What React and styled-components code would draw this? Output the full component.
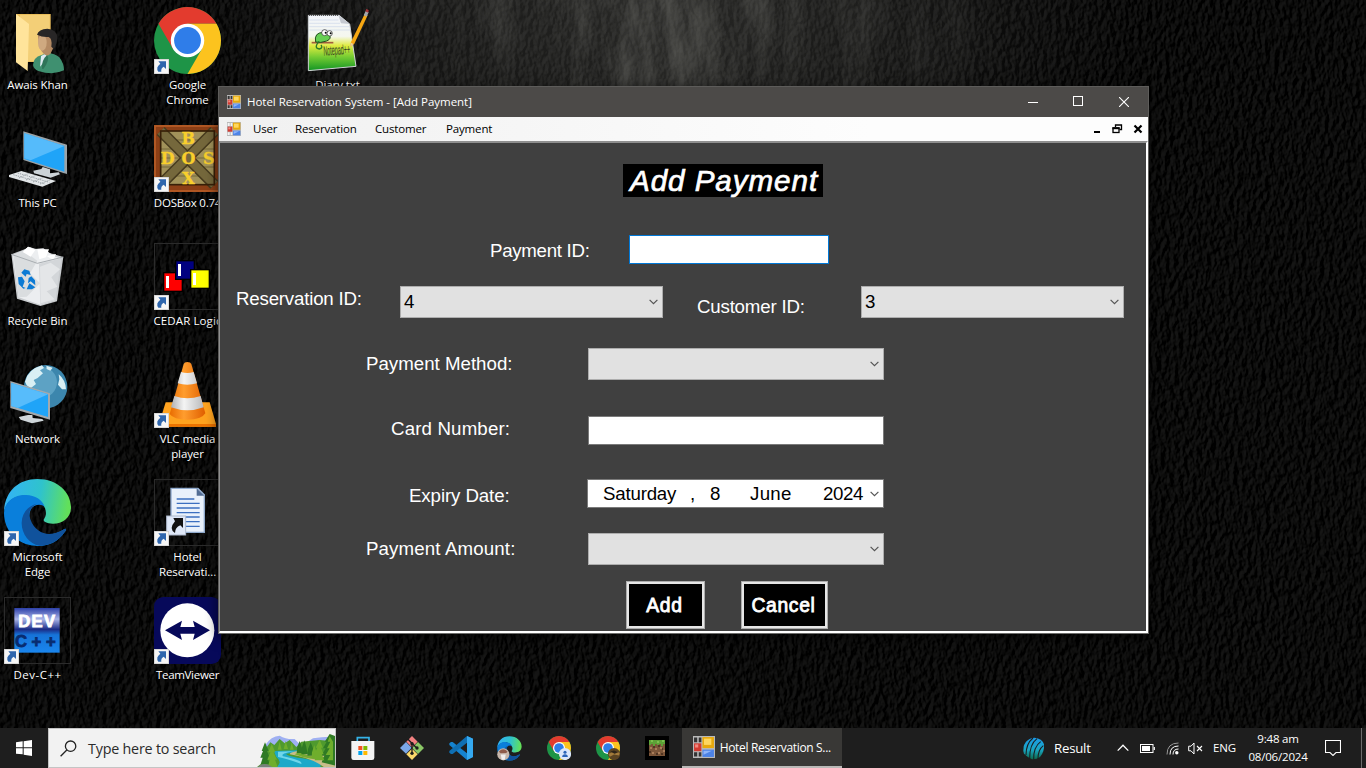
import React from "react";
import styled, { createGlobalStyle } from "styled-components";

const ui = `"Open Sans", "Noto Sans", sans-serif`;
const classic = `"Liberation Sans", Arial, sans-serif`;

const Global = createGlobalStyle`
  * { box-sizing: border-box; }
  body { margin: 0; background: #0a0a0a; overflow: hidden; }
  svg { display: block; flex: none; }
`;

const Screen = styled.div`
  display: grid;
  grid-template: 728px 40px / 1366px;
  width: 1366px;
  height: 768px;
  overflow: hidden;
  font-family: ${ui};
  font-size: 11.5px;
  letter-spacing: -0.2px;
`;

const WallpaperArt = styled.svg`
  grid-area: 1 / 1 / 3 / 2;
`;

const Desktop = styled.main`
  grid-area: 1 / 1;
  position: relative;
  display: flex;
  gap: 75px;
  padding-top: 7px;
`;

const IconColumn = styled.div`
  display: flex;
  flex-direction: column;
  width: 75px;
`;

const Shortcut = styled.div`
  display: flex;
  flex-direction: column;
  align-items: center;
  height: 118px;
`;

const IconFrame = styled.div`
  position: relative;
  width: 67px;
  height: 67px;
  outline: ${(p) => (p.$outlined ? "1px solid #2b2b2b" : "none")};
  outline-offset: -1px;
`;

const ArrowBadge = styled.svg`
  position: absolute;
  left: 0;
  bottom: 0;
`;

const ShortcutLabel = styled.div`
  margin-top: 3px;
  line-height: 15px;
  text-align: center;
  white-space: pre;
  letter-spacing: ${(p) => p.$track ?? -0.1}px;
  color: #fff;
  text-shadow: 1px 1px 2px #000;
`;

/* ---------- application window ---------- */

const AppWindow = styled.section`
  position: absolute;
  left: 218px;
  top: 86px;
  width: 931px;
  height: 548px;
  display: flex;
  flex-direction: column;
  border: 1px solid #5d5c5a;
  border-bottom-color: #6d6d6b;
  background: #4c4a48;
  box-shadow: 0 3px 12px rgba(0, 0, 0, 0.6);
`;

const TitleBar = styled.header`
  display: flex;
  align-items: center;
  height: 30px;
  padding: 0 1px 1px 8px;
  color: #fff;
  background: #4c4a48;
`;

const WindowTitle = styled.div`
  flex: 1;
  margin-left: 6px;
  line-height: 16px;
  letter-spacing: -0.02px;
`;

const CaptionButton = styled.div`
  display: flex;
  justify-content: center;
  align-items: center;
  width: 45.5px;
  height: 30px;
`;

const MenuBar = styled.nav`
  display: flex;
  align-items: center;
  height: 24px;
  padding: 0 5px 0 8px;
  background: linear-gradient(90deg, #f0f0f0, #fdfdfd 70%);
  color: #000;
`;

const MenuItem = styled.div`
  width: ${(p) => p.$width}px;
  line-height: 16px;
  letter-spacing: -0.15px;
`;

const MdiButtons = styled.div`
  display: flex;
  gap: 10px;
  margin-left: auto;
`;

const Client = styled.div`
  flex: 1;
  display: flex;
  flex-direction: column;
  border: solid;
  border-width: 2px 2px 2px 1px;
  border-color: #8f8f8f #fff #fff #8f8f8f;
  background: #404040;
  font-family: ${classic};
  font-size: 18.7px;
  letter-spacing: 0;
  color: #fff;
`;

const FormTitle = styled.h1`
  width: 200px;
  height: 33px;
  margin: 21px 0 0 403px;
  padding-left: 7px;
  background: #000;
  font-size: 29.6px;
  font-weight: 400;
  font-style: italic;
  line-height: 34px;
  letter-spacing: 0.95px;
  white-space: nowrap;
  -webkit-text-stroke: 0.7px #fff;
`;

const Row = styled.div`
  display: flex;
  align-items: flex-start;
  height: ${(p) => p.$height}px;
  margin-top: ${(p) => p.$gap}px;
  padding-left: ${(p) => p.$indent}px;
`;

const Label = styled.label`
  width: ${(p) => p.$width}px;
  margin-top: ${(p) => p.$drop}px;
  line-height: 22px;
  white-space: nowrap;
  letter-spacing: ${(p) => p.$track || 0}px;
`;

const TextBox = styled.div`
  width: ${(p) => p.$width}px;
  height: 29px;
  border: 1px solid ${(p) => (p.$focused ? "#0078d7" : "#7a7a7a")};
  background: #fff;
`;

const Combo = styled.div`
  display: flex;
  align-items: center;
  justify-content: space-between;
  width: ${(p) => p.$width}px;
  height: 32px;
  margin-right: ${(p) => p.$after || 0}px;
  padding: 0 4px 0 3px;
  border: 1px solid #adadad;
  background: #e1e1e1;
  color: #000;
`;

const DatePicker = styled.div`
  display: flex;
  align-items: center;
  width: 297px;
  height: 29px;
  padding: 0 4px 0 15px;
  border: 1px solid #7a7a7a;
  background: #fff;
  color: #000;
  svg { margin-left: auto; }
`;

const DatePart = styled.span`
  width: ${(p) => p.$width}px;
  letter-spacing: ${(p) => p.$track ?? -0.2}px;
`;

const PushButton = styled.div`
  display: flex;
  align-items: center;
  justify-content: center;
  width: ${(p) => p.$width}px;
  height: 48px;
  margin-right: 36px;
  padding: 1px 2px 0 0;
  border: 1px solid #adadad;
  box-shadow: inset 0 0 0 2px #e6e6e6;
  background: #000;
  font-size: 19.3px;
  letter-spacing: 0.65px;
  -webkit-text-stroke: 0.8px #fff;
`;

/* ---------- taskbar ---------- */

const Taskbar = styled.footer`
  grid-area: 2 / 1;
  position: relative;
  display: flex;
  height: 40px;
  background: rgba(31, 31, 31, 0.97);
  color: #fff;
`;

const StartButton = styled.div`
  display: flex;
  align-items: center;
  justify-content: center;
  width: 48px;
`;

const SearchBox = styled.div`
  display: flex;
  align-items: center;
  width: 288px;
  margin-right: 2px;
  padding-left: 11px;
  border: 1px solid #c4c4c4;
  background: #f2f2f2;
  color: #2b2b2b;
`;

const SearchText = styled.span`
  flex: 1;
  margin-left: 11px;
  font-size: 14.3px;
`;

const Pinned = styled.div`
  display: flex;
  align-items: center;
  justify-content: center;
  width: 49.1px;
`;

const RunningTask = styled.div`
  display: flex;
  align-items: center;
  gap: 5px;
  width: 160px;
  padding-left: 11px;
  border-bottom: 2px solid #bab9b7;
  background: #393836;
  font-size: 12px;
  letter-spacing: -0.33px;
`;

const Tray = styled.div`
  display: flex;
  margin-left: auto;
`;

const NewsItem = styled.div`
  display: flex;
  align-items: center;
  gap: 9px;
  width: 90px;
  font-size: 13.2px;
`;

const TraySlot = styled.div`
  display: flex;
  flex-direction: column;
  align-items: center;
  justify-content: center;
  width: ${(p) => p.$width}px;
  line-height: 18px;
`;

const PeekEdge = styled.div`
  width: 5px;
  margin-left: 8px;
  border-left: 1px solid #6b6b6b;
`;

/* ---------- drawings ---------- */

const Wallpaper = () => (
  <WallpaperArt width="1366" height="768">
    <defs>
      <filter id="leather" x="0" y="0" width="100%" height="100%" colorInterpolationFilters="sRGB">
        <feTurbulence type="fractalNoise" baseFrequency="0.22 0.13" numOctaves="3" seed="8" />
        <feDiffuseLighting surfaceScale="2.4" diffuseConstant="1" lightingColor="#fff">
          <feDistantLight azimuth="205" elevation="50" />
        </feDiffuseLighting>
        <feComponentTransfer>
          <feFuncR type="linear" slope="0.17" intercept="-0.082" />
          <feFuncG type="linear" slope="0.17" intercept="-0.082" />
          <feFuncB type="linear" slope="0.17" intercept="-0.084" />
        </feComponentTransfer>
      </filter>
      <filter id="streaks" x="0" y="0" width="100%" height="100%" colorInterpolationFilters="sRGB">
        <feTurbulence type="fractalNoise" baseFrequency="0.035 0.009" numOctaves="5" seed="3" />
        <feColorMatrix values="0 0 0 0 .45  0 0 0 0 .45  0 0 0 0 .43  1.8 0 0 0 -.72" />
      </filter>
      <radialGradient id="glow" gradientUnits="userSpaceOnUse" cx="660" cy="-20" r="480" gradientTransform="scale(1 .7)">
        <stop offset="0" stopColor="#777772" stopOpacity=".36" />
        <stop offset=".5" stopColor="#666662" stopOpacity=".22" />
        <stop offset="1" stopColor="#555" stopOpacity="0" />
      </radialGradient>
      <radialGradient id="streakFade" gradientUnits="userSpaceOnUse" cx="660" cy="0" r="360">
        <stop offset="0" stopColor="#fff" stopOpacity=".7" />
        <stop offset="1" stopColor="#fff" stopOpacity="0" />
      </radialGradient>
      <mask id="streakMask"><rect width="1366" height="400" fill="url(#streakFade)" /></mask>
    </defs>
    <rect width="1366" height="768" fill="#0b0b0b" />
    <rect width="1366" height="768" filter="url(#leather)" />
    <rect width="1366" height="400" fill="url(#glow)" />
    <g mask="url(#streakMask)"><rect width="1366" height="400" filter="url(#streaks)" /></g>
  </WallpaperArt>
);

const Badge = () => (
  <ArrowBadge width="15" height="15" viewBox="0 0 45 45">
    <rect width="45" height="45" fill="#f6f6f6" />
    <rect x="1" y="1" width="43" height="43" fill="none" stroke="#c9c9c9" strokeWidth="2" />
    <path d="M13 7H36V30L29 23Q20 28 22 38H13Q4 25 19 14Z" fill="#2f66ad" />
  </ArrowBadge>
);

const ChromeMark = () => (
  <g>
    <circle r="100" fill="#1e9447" />
    <path d="M-86.6-50A100 100 0 0 1 86.6-50H0L-43 25Z" fill="#e33b2e" />
    <path d="M86.6-50A100 100 0 0 1 0 100L43 25L0-50Z" fill="#fcc31e" />
    <circle r="50" fill="#fff" />
    <circle r="40" fill="#2f7de9" />
  </g>
);

const EdgeMark = () => (
  <g>
    <path d="M12 155C14 95 55 57 112 57C175 57 214 99 213 144C212 176 184 192 158 191C138 190 130 184 131 179C138 168 140 158 135 145C124 116 91 103 62 108C35 112 18 131 12 155Z" fill="url(#edgeTop)" />
    <path d="M12 158C15 122 45 103 78 105C105 106 127 119 134 140C124 130 100 132 92 149C78 180 102 220 142 223C164 225 181 214 194 207C200 205 199 211 194 216C174 247 139 261 106 257C52 254 12 213 12 158Z" fill="#0a7fdb" />
    <path d="M65 188C66 160 82 138 111 131C91 140 83 158 91 178C101 208 126 222 147 222C167 222 181 213 194 207C200 205 199 211 194 216C176 245 145 258 118 257C88 253 64 221 65 188Z" fill="#10529c" />
    <defs>
      <linearGradient id="edgeTop" gradientUnits="userSpaceOnUse" x1="20" y1="120" x2="212" y2="150">
        <stop offset="0" stopColor="#33b4f2" />
        <stop offset=".5" stopColor="#2fc3cc" />
        <stop offset=".95" stopColor="#62e05a" />
      </linearGradient>
    </defs>
  </g>
);

const Art = ({ box, children }) => (
  <svg width="67" height="67" viewBox={box}>{children}</svg>
);

const UserFolder = () => (
  <Art box="12 21 201 201">
    <path d="M48 42H152V186H62Z" fill="#e9bd5a" />
    <path d="M60 45H149V184H60Z" fill="#f3cf77" />
    <path d="M48 42L87 72L83 213L48 187Z" fill="#ffe49b" />
    <path d="M99 195Q101 172 123 166L138 160Q160 157 178 172Q192 190 192 211Q160 227 115 213Q101 207 99 195Z" fill="#3f9070" />
    <path d="M123 168L142 158L134 184L120 200Z" fill="#dce9ef" />
    <path d="M126 206Q124 180 142 164Q150 180 130 207Z" fill="#2f7459" />
    <path d="M114 108Q114 92 140 91Q168 96 164 128Q160 150 148 164Q140 170 131 161Q115 145 114 108Z" fill="#b48a63" />
    <ellipse cx="127" cy="128" rx="13" ry="24" fill="#cfa980" />
    <path d="M111 104Q116 87 142 86Q170 88 172 111Q171 136 161 147L154 140Q158 117 146 111Q128 113 111 104Z" fill="#282626" />
  </Art>
);

const ThisPc = () => (
  <Art box="12 375 201 201">
    <path d="M70 394L201 434V522L190 519L70 480Z" fill="#9aa3a8" />
    <path d="M73 400L193 438V515L73 477Z" fill="#1fa4f8" />
    <path d="M73 400L193 438L92 481L73 475Z" fill="#55bbfb" />
    <path d="M128 501L150 508V520L176 517L180 523L152 533L102 520L100 512L124 507Z" fill="#ccd3d7" />
    <path d="M27 525L64 513L168 543L127 560L27 531Z" fill="#e2e6e8" />
    <path d="M40 524L135 552M53 519L148 547M57 534L86 520M78 540L107 526M99 546L128 533M120 552L149 540" stroke="#9aa1a6" strokeWidth="3" strokeDasharray="4 3" />
  </Art>
);

const RecycleBin = () => (
  <Art box="12 69 201 201">
    <path d="M34 103L90 82L190 111L171 244L121 258L51 236Z" fill="#c9cccf" />
    <path d="M38 106L70 92L85 80L104 87L130 85L150 100L160 108L180 115L165 240L121 254L56 232Z" fill="#eceef0" />
    <path d="M40 105L70 92L112 122L90 160L120 190L80 230L56 232Z" fill="#dadddf" />
    <path d="M117 131L184 115L166 240L121 254Z" fill="#d3d6d9" />
    <path d="M120 140L152 128L180 148L154 172L172 200L140 214L164 238L122 250Z" fill="#e4e6e8" />
    <path d="M84 80L106 90L92 110L68 96ZM112 88L147 88L138 112L118 118ZM140 108L168 102L160 120Z" fill="#fff" />
    <path d="M34 103L112 130L190 111" fill="none" stroke="#a8adb1" strokeWidth="3" />
    <path d="M64 158L73 148L88 152L92 165L80 162L77 170ZM94 169L105 181L106 196L92 184L84 190L86 174ZM88 190L106 202L96 208L80 208ZM54 172L66 170L74 184L68 200L77 204L70 206L56 192Z" fill="#0b7ad4" />
  </Art>
);

const NetworkArt = () => (
  <Art box="12 423 201 201">
    <circle cx="137" cy="500" r="65" fill="#3c86ad" />
    <circle cx="125" cy="487" r="46" fill="#5da2c4" />
    <path d="M75 485Q84 448 126 436L132 444L120 451L129 460L113 474L101 480L108 492L92 505L80 496ZM139 437L158 443L151 452L140 447ZM176 463Q197 480 198 508L186 508L174 494L178 478Z" fill="#d9eff4" />
    <path d="M31 483L150 520V599L31 564Z" fill="#a3a9ad" />
    <path d="M34 489L144 523V591L34 558Z" fill="#1fa4f8" />
    <path d="M34 489L144 523L53 564L34 558Z" fill="#57bcfb" />
    <path d="M56 591L84 585L97 585L98 594L127 597L131 602L96 610L62 599Z" fill="#cfd6da" />
  </Art>
);

const DevCpp = () => (
  <Art box="12 411 201 201">
    <defs>
      <linearGradient id="devBg" x2="0" y2="1">
        <stop offset="0" stopColor="#2c3fa8" />
        <stop offset=".25" stopColor="#a9b4e8" />
        <stop offset=".48" stopColor="#1b2c86" />
        <stop offset=".6" stopColor="#1673d8" />
        <stop offset="1" stopColor="#1a86ee" />
      </linearGradient>
    </defs>
    <rect x="43" y="444" width="136" height="134" fill="url(#devBg)" />
    <g fontFamily={classic} fontWeight="700" fontSize="50" textAnchor="middle" strokeWidth="2.5">
      <text x="112" y="502" fill="#fff" stroke="#fff" letterSpacing="4">DEV</text>
      <text x="113" y="562" fill="#082c70" stroke="#082c70" letterSpacing="14">C++</text>
    </g>
  </Art>
);

const DosBox = () => (
  <Art box="462 375 201 201">
    <rect x="462" y="375" width="201" height="201" fill="#8c3f16" />
    <rect x="465" y="378" width="195" height="195" fill="none" stroke="#b95d27" strokeWidth="5" />
    <rect x="482" y="393" width="161" height="161" fill="#a1925a" />
    <path d="M482 420H643M482 447H643M482 474H643M482 501H643M482 528H643" stroke="#75693b" strokeWidth="3" />
    <path d="M482 393L643 554M643 393L482 554" stroke="#473b1e" strokeWidth="34" />
    <path d="M482 393L643 554M643 393L482 554" stroke="#75683c" strokeWidth="25" />
    <rect x="482" y="393" width="161" height="161" fill="none" stroke="#382008" strokeWidth="5" />
    <g fontFamily='"DejaVu Serif", serif' fontWeight="700" fontSize="48" fill="#f9cf2c" stroke="#f9cf2c" strokeWidth="1" textAnchor="middle">
      <text x="565" y="433">B</text>
      <text x="503" y="491">D</text><text x="565" y="491">O</text><text x="626" y="491">S</text>
      <text x="565" y="551">X</text>
    </g>
  </Art>
);

const Cedar = () => (
  <Art box="462 69 201 201">
    <g stroke="#000" strokeWidth="4">
      <rect x="491" y="158" width="56" height="56" fill="#f00" />
      <rect x="527" y="122" width="56" height="56" fill="#000080" />
      <rect x="572" y="149" width="56" height="56" fill="#ff0" />
    </g>
    <path d="M498 168H507V204H498ZM534 132H543V168H534ZM579 159H588V195H579Z" fill="#fff" />
  </Art>
);

const Vlc = () => (
  <Art box="462 423 201 201">
    <defs>
      <linearGradient id="cone"><stop offset="0" stopColor="#e96c00" /><stop offset=".4" stopColor="#ff9d2e" /><stop offset="1" stopColor="#e05f00" /></linearGradient>
      <linearGradient id="band"><stop offset="0" stopColor="#aeb0b2" /><stop offset=".4" stopColor="#f4f4f4" /><stop offset="1" stopColor="#b9babc" /></linearGradient>
    </defs>
    <path d="M497 547H629L648 612V620H477V612Z" fill="#ffa31f" />
    <path d="M477 612H648V620H477Z" fill="#ec7300" />
    <path d="M551 432Q553 426 562 426Q572 426 574 432L616 580Q605 599 562 599Q521 599 509 582Z" fill="url(#cone)" />
    <path d="M543 456Q562 462 581 456L591 490Q562 498 533 490ZM523 528Q562 542 602 528L611 562Q562 580 513 562Z" fill="url(#band)" />
  </Art>
);

const HotelDoc = () => (
  <Art box="462 57 201 201">
    <path d="M513 85H594L613 104V217H513Z" fill="#e9f1fb" stroke="#8fa9cc" strokeWidth="4" />
    <path d="M590 85V107H613Z" fill="#526d94" />
    <path d="M530 117H583M530 130H599M530 144H599M530 158H599M530 171H599M555 185H599M555 199H599" stroke="#3b6fc0" strokeWidth="4" />
    <rect x="500" y="168" width="57" height="57" fill="#dfe8f8" stroke="#aeb9cc" strokeWidth="3" />
    <path d="M520 174H549V204L541 196Q525 202 525 219Q505 207 525 184Z" fill="#111" />
  </Art>
);

const TeamViewer = () => (
  <Art box="462 411 201 201">
    <rect x="462" y="411" width="201" height="201" rx="28" fill="#07095a" />
    <circle cx="562" cy="511" r="81" fill="#fff" />
    <path d="M495 511L546 482L541 501H584L579 482L630 511L579 540L584 521H541L546 540Z" fill="#07095a" />
  </Art>
);

const NotepadPage = () => (
  <Art box="267 21 201 201">
    <defs>
      <linearGradient id="page" x2="0" y2="1">
        <stop offset="0" stopColor="#f2f5fb" /><stop offset=".38" stopColor="#f5f7ee" />
        <stop offset=".55" stopColor="#dfec3f" /><stop offset=".75" stopColor="#76cc33" /><stop offset="1" stopColor="#119523" />
      </linearGradient>
    </defs>
    <path d="M280 46H372L404 72L423 199L280 212Z" fill="url(#page)" stroke="#cfd3d6" strokeWidth="3" />
    <path d="M282 45H370" stroke="#333" strokeWidth="5" strokeDasharray="3 3" />
    <path d="M370 46L378 70L404 72Z" fill="#c5c9d0" />
    <path d="M283 60H370M283 70H375M283 80H403M283 90H405" stroke="#ccd7ea" strokeWidth="2" />
    <path d="M290 128H355" stroke="#a55f3c" strokeWidth="5" />
    <path d="M302 126Q296 98 325 97L342 103Q352 116 335 123Q316 130 302 126Z" fill="#66cf53" stroke="#254f20" strokeWidth="3" />
    <path d="M312 124Q295 145 313 147Q325 144 318 135" fill="none" stroke="#2c7a28" strokeWidth="4" />
    <circle cx="329" cy="98" r="9" fill="#fff" stroke="#222" strokeWidth="2" /><circle cx="344" cy="100" r="8" fill="#fff" stroke="#222" strokeWidth="2" />
    <circle cx="332" cy="98" r="3" /><circle cx="347" cy="100" r="3" />
    <text transform="translate(326 167) rotate(-4) scale(.4 1)" fontFamily={classic} fontSize="41" fill="#39461f">Notepad++</text>
    <path d="M405 141L408 126L449 42L458 46L418 131Z" fill="#f6a712" />
    <path d="M405 141L408 128L416 132Z" fill="#e8c99b" />
    <path d="M446 46L452 33L461 37L455 50Z" fill="#a4a6aa" />
    <path d="M451 34L454 27L461 30L460 38Z" fill="#a8343a" />
  </Art>
);

const FormIcon = ({ size, dark }) => (
  <svg width={size} height={size} viewBox="0 0 42 42">
    <rect width="42" height="42" fill="#b9b9b9" />
    <path d="M2 3H8V12H2ZM2 31H8V39H2ZM11 31H16V39H11ZM11 3H16V12H11Z" fill={dark ? "#343434" : "#f4f4f4"} />
    <rect x="2" y="14" width="14" height="15" fill="#d23a31" /><rect x="4" y="16" width="6" height="6" fill="#f08a80" />
    <rect x="18" y="2" width="22" height="21" fill="#e8a90c" /><rect x="21" y="5" width="14" height="12" fill="#ffd75e" />
    <rect x="18" y="26" width="22" height="14" fill="#4d83e6" /><path d="M20 28H36L20 36Z" fill="#8fb5fa" />
  </svg>
);

const Chevron = () => (
  <svg width="9" height="6" viewBox="0 0 9 6">
    <path d="M.6.9L4.5 4.7L8.4.9" fill="none" stroke="#555" strokeWidth="1.2" />
  </svg>
);

const SearchScene = () => (
  <svg width="78" height="38" viewBox="772 12 234 114" preserveAspectRatio="none">
    <path d="M795 62Q815 32 840 32Q860 44 885 42L905 62L940 40Q975 34 1008 36V70H795Z" fill="#9fb0f2" />
    <path d="M795 75L812 52L824 60L840 42L855 55L870 45L890 66L905 50L960 45L1008 50V126H772L790 112Z" fill="#4f9a2e" />
    <path d="M822 78L895 76Q905 82 860 86Q858 94 920 102Q975 112 960 128H830Q850 110 830 96Z" fill="#1ca9c9" />
    <path d="M835 80L885 79Q840 85 850 94Q910 106 905 117Q860 100 835 96Z" fill="#6fd6ea" />
    <path d="M893 78Q870 82 870 88Q940 100 975 128L1008 128V90Q950 92 893 78Z" fill="#c8bd8a" />
    <path d="M900 80Q920 96 975 96L1008 92V104Q940 110 885 88Z" fill="#76ab31" />
    <g fill="#2f7a24">
      <path d="M796 52L786 78H790L782 98H789L783 118H810L804 98H810L802 78H807Z" />
      <path d="M900 48L893 66L891 84H910L906 66ZM914 46L906 70L905 88H924L920 66ZM933 52L925 72L923 92H944L940 70Z" />
      <path d="M990 27L975 50H981L970 70H978L965 92H974L966 112L1008 122V34Z" />
    </g>
    <g fill="#6fae2c">
      <path d="M816 56L806 82H812L803 104H811L804 126H834L826 104H832L822 82H827Z" />
      <path d="M960 44L948 68H953L944 88H951L945 106H974L966 88H972L964 68H970ZM944 60L937 82L936 98H954L950 80Z" />
      <path d="M990 34L984 50H992L982 70H990L978 90H992L983 106H1000V50Z" />
      <path d="M840 50L834 74H846ZM858 48L852 72H865ZM876 52L871 74H882Z" />
    </g>
    <path d="M774 128Q782 114 803 118L822 128Z" fill="#77807a" />
  </svg>
);

const pinned = {
  store: (
    <svg width="24" height="24" viewBox="32 36 72 72">
      <path d="M51 52V41H86V52" fill="none" stroke="#35b3e8" strokeWidth="5" />
      <path d="M33 51H102V101Q102 108 95 108H40Q33 108 33 101Z" fill="#f4f4f4" />
      <path d="M54 66H66V78H54Z" fill="#f25022" /><path d="M69 66H81V78H69Z" fill="#7fba00" />
      <path d="M54 81H66V93H54Z" fill="#00a4ef" /><path d="M69 81H81V93H69Z" fill="#ffb900" />
    </svg>
  ),
  git: (
    <svg width="24" height="24" viewBox="180 36 72 72">
      <path d="M216 36L233 53L216 70L199 53Z" fill="#f28181" /><path d="M234 54L252 72L234 90L216 72Z" fill="#8bc766" />
      <path d="M198 54L215 71L198 89L180 72Z" fill="#7aa7e8" /><path d="M216 74L233 91L216 108L199 91Z" fill="#fbd86b" />
      <path d="M204 46L216 58V90M216 58L230 72" stroke="#1d1d1d" strokeWidth="4" fill="none" />
      <circle cx="216" cy="59" r="5" fill="#1d1d1d" /><circle cx="231" cy="72" r="5" fill="#1d1d1d" /><circle cx="216" cy="88" r="5" fill="#1d1d1d" />
    </svg>
  ),
  code: (
    <svg width="24" height="24" viewBox="327 36 72 72">
      <path d="M381 36L399 44V99L381 108L328 63V58L333 54H338L381 88Z" fill="#1583cf" />
      <path d="M381 36V56L338 90H333L328 86V81Z" fill="#0f6fb3" />
      <path d="M381 36L399 44V99L381 108Z" fill="#35a9f0" />
    </svg>
  ),
  edge: (
    <svg width="25" height="25" viewBox="10 55 206 206">
      <EdgeMark />
      <circle cx="62" cy="206" r="50" fill="#c7b7ac" />
      <path d="M25 185Q60 145 97 184L85 196L40 197Z" fill="#8e5b4b" /><path d="M42 207H82L74 250H48Z" fill="#f0eeee" />
    </svg>
  ),
  chromeUser: (
    <svg width="24" height="24" viewBox="-100 -100 200 200">
      <ChromeMark /><circle cx="50" cy="50" r="51" fill="#dbe7fb" />
      <circle cx="50" cy="35" r="13" fill="#2c64b8" /><path d="M27 75V64Q50 42 73 64V75Z" fill="#2c64b8" />
    </svg>
  ),
  chromePhoto: (
    <svg width="24" height="24" viewBox="-100 -100 200 200">
      <ChromeMark /><circle cx="50" cy="50" r="51" fill="#5a4322" />
      <path d="M3 50Q45 22 98 40L92 62L50 54L15 72Z" fill="#a27a3b" /><path d="M20 30L50 20L84 36L55 48Z" fill="#2d2418" />
    </svg>
  ),
  block: (
    <svg width="24" height="24" viewBox="0 0 24 24" shapeRendering="crispEdges">
      <rect width="24" height="24" fill="#000" /><rect x="4" y="4" width="16" height="16" fill="#7c5639" />
      <path d="M4 4H20V8H18V10H16V8H14V9H12V8H10V10H8V8H6V9H4Z" fill="#5da237" />
      <path d="M6 4H8V6H6ZM12 5H14V7H12ZM17 4H19V6H17Z" fill="#7bc04e" />
      <path d="M5 11H7V13H5ZM10 12H12V14H10ZM15 11H17V13H15ZM7 16H9V18H7ZM13 16H15V18H13ZM18 14H20V16H18Z" fill="#a97d59" />
      <path d="M8 10H10V12H8ZM13 9H15V11H13ZM4 15H6V17H4ZM11 17H13V19H11ZM16 17H18V19H16ZM17 12H18V14H17Z" fill="#513522" />
    </svg>
  ),
};

const columns = [
  [
    { label: "Awais Khan", art: <UserFolder /> },
    { label: "This PC", art: <ThisPc /> },
    { label: "Recycle Bin", art: <RecycleBin />, track: 0 },
    { label: "Network", art: <NetworkArt /> },
    { label: "Microsoft\nEdge", art: <Art box="12 57 201 201"><EdgeMark /></Art>, link: true },
    { label: "Dev-C++", art: <DevCpp />, link: true, outlined: true, track: 0.5 },
  ],
  [
    { label: "Google\nChrome", art: <Art box="-100 -100 200 200"><ChromeMark /></Art>, link: true },
    { label: "DOSBox 0.74", art: <DosBox />, link: true, track: -0.2 },
    { label: "CEDAR Logic", art: <Cedar />, link: true, outlined: true, track: 0.1 },
    { label: "VLC media\nplayer", art: <Vlc />, link: true },
    { label: "Hotel\nReservati...", art: <HotelDoc />, link: true, outlined: true },
    { label: "TeamViewer", art: <TeamViewer />, link: true, track: -0.3 },
  ],
  [{ label: "Diary.txt", art: <NotepadPage /> }],
];

const PaymentWindow = () => (
  <AppWindow>
    <TitleBar>
      <FormIcon size={14} dark />
      <WindowTitle>Hotel Reservation System - [Add Payment]</WindowTitle>
      <CaptionButton><svg width="10" height="10"><path d="M0 5.5H10" stroke="#fff" /></svg></CaptionButton>
      <CaptionButton><svg width="11" height="11"><rect x=".5" y=".5" width="9" height="9" fill="none" stroke="#fff" shapeRendering="crispEdges" /></svg></CaptionButton>
      <CaptionButton><svg width="10" height="10"><path d="M0 0L10 10M10 0L0 10" stroke="#fff" strokeWidth="1.1" /></svg></CaptionButton>
    </TitleBar>
    <MenuBar>
      <FormIcon size={14} />
      <MenuItem $width={12} />
      <MenuItem $width={42}>User</MenuItem>
      <MenuItem $width={80}>Reservation</MenuItem>
      <MenuItem $width={71}>Customer</MenuItem>
      <MenuItem $width={60}>Payment</MenuItem>
      <MdiButtons>
        <svg width="10" height="10"><path d="M2 8H8" stroke="#000" strokeWidth="2" /></svg>
        <svg width="11" height="10"><path d="M3.5 3V1H9.5V5.5H7.5M3 1H10" fill="none" stroke="#000" strokeWidth="1.3" /><rect x="1" y="4" width="6" height="4.5" fill="none" stroke="#000" strokeWidth="1.3" /><path d="M.4 4.2H7.6" stroke="#000" strokeWidth="2" /></svg>
        <svg width="10" height="10"><path d="M1.5 1.5L8.5 8.5M8.5 1.5L1.5 8.5" stroke="#000" strokeWidth="2.2" /></svg>
      </MdiButtons>
    </MenuBar>
    <Client>
      <FormTitle>Add Payment</FormTitle>
      <Row $height={29} $gap={38} $indent={270}>
        <Label $width={139} $drop={5} $track={-0.3}>Payment ID:</Label>
        <TextBox $width={200} $focused />
      </Row>
      <Row $height={32} $gap={22} $indent={16}>
        <Label $width={164} $drop={2} $track={-0.2}>Reservation ID:</Label>
        <Combo $width={263} $after={34}>4<Chevron /></Combo>
        <Label $width={164} $drop={10} $track={-0.2}>Customer ID:</Label>
        <Combo $width={263}>3<Chevron /></Combo>
      </Row>
      <Row $height={32} $gap={30} $indent={146}>
        <Label $width={222} $drop={5}>Payment Method:</Label>
        <Combo $width={296}><span /><Chevron /></Combo>
      </Row>
      <Row $height={29} $gap={36} $indent={171}>
        <Label $width={197} $drop={2} $track={0.15}>Card Number:</Label>
        <TextBox $width={296} />
      </Row>
      <Row $height={29} $gap={34} $indent={189}>
        <Label $width={178} $drop={6} $track={-0.1}>Expiry Date:</Label>
        <DatePicker>
          <DatePart $width={87}>Saturday</DatePart>
          <DatePart $width={20}>,</DatePart>
          <DatePart $width={40}>8</DatePart>
          <DatePart $width={73} $track={0.3}>June</DatePart>
          <DatePart $width={40} $track={-0.4}>2024</DatePart>
          <Chevron />
        </DatePicker>
      </Row>
      <Row $height={32} $gap={25} $indent={146}>
        <Label $width={222} $drop={5} $track={0.13}>Payment Amount:</Label>
        <Combo $width={296}><span /><Chevron /></Combo>
      </Row>
      <Row $height={48} $gap={16} $indent={406}>
        <PushButton $width={79}>Add</PushButton>
        <PushButton $width={87}>Cancel</PushButton>
      </Row>
    </Client>
  </AppWindow>
);

export default function App() {
  return (
    <Screen>
      <Global />
      <Wallpaper />
      <Desktop>
        {columns.map((items, i) => (
          <IconColumn key={i}>
            {items.map((it) => (
              <Shortcut key={it.label}>
                <IconFrame $outlined={it.outlined}>
                  {it.art}
                  {it.link && <Badge />}
                </IconFrame>
                <ShortcutLabel $track={it.track}>{it.label}</ShortcutLabel>
              </Shortcut>
            ))}
          </IconColumn>
        ))}
        <PaymentWindow />
      </Desktop>
      <Taskbar>
        <StartButton>
          <svg width="16" height="16" viewBox="0 0 48 48"><path d="M0 7L20 4V22H0ZM23 3.5L48 0V22H23ZM0 25H20V43L0 41ZM23 25H48V48L23 44Z" fill="#fff" /></svg>
        </StartButton>
        <SearchBox>
          <svg width="17" height="17" viewBox="0 0 17 17"><circle cx="10.6" cy="6.2" r="5.2" fill="none" stroke="#222" strokeWidth="1.3" /><path d="M6.8 10L.6 16.2" stroke="#222" strokeWidth="1.3" /></svg>
          <SearchText>Type here to search</SearchText>
          <SearchScene />
        </SearchBox>
        {Object.entries(pinned).map(([name, icon]) => <Pinned key={name}>{icon}</Pinned>)}
        <RunningTask><FormIcon size={22} dark />Hotel Reservation S...</RunningTask>
        <Tray>
          <NewsItem>
            <svg width="23" height="23" viewBox="0 0 69 69">
              <defs><linearGradient id="ball" x2="0" y2="1"><stop offset="0" stopColor="#1c9be8" /><stop offset=".55" stopColor="#1aa6c4" /><stop offset="1" stopColor="#0b6a4c" /></linearGradient></defs>
              <path d="M38 2Q60 4 66 22Q68 44 54 60Q44 68 30 67Q16 60 6 50Q0 30 12 14Q24 2 38 2Z" fill="url(#ball)" />
              <path d="M33 3Q12 20 12 54M45 5Q22 22 23 66M56 14Q34 30 35 68M64 26Q48 38 48 66" fill="none" stroke="#1b1f22" strokeWidth="3.2" />
            </svg>
            Result
          </NewsItem>
          <TraySlot $width={22}><svg width="12" height="8"><path d="M.7 6.6L6 1.2L11.3 6.6" fill="none" stroke="#fff" strokeWidth="1.3" /></svg></TraySlot>
          <TraySlot $width={26}><svg width="15" height="9"><rect x=".5" y=".5" width="12.5" height="8" fill="none" stroke="#fff" /><rect x="2" y="2" width="8" height="5" fill="#fff" /><path d="M14.3 3V6" stroke="#fff" strokeWidth="1.2" /></svg></TraySlot>
          <TraySlot $width={24}><svg width="13" height="13" viewBox="0 0 13 13"><g fill="none" stroke="#fff"><path d="M1 12.5Q1 1 12.5 1" stroke="#999" /><path d="M4 12.5Q4 4 12.5 4" /><path d="M7 12.5Q7 7 12.5 7" /></g><circle cx="10.8" cy="10.8" r="1.7" fill="#fff" /></svg></TraySlot>
          <TraySlot $width={22}><svg width="15" height="13" viewBox="0 0 15 13"><path d="M.7 4.2H3L6 1V12L3 8.8H.7Z" fill="none" stroke="#fff" /><path d="M9 4L14 9M14 4L9 9" stroke="#fff" strokeWidth="1.1" /></svg></TraySlot>
          <TraySlot $width={37}>ENG</TraySlot>
          <TraySlot $width={70}><span>9:48 am</span><span>08/06/2024</span></TraySlot>
          <TraySlot $width={40}><svg width="16" height="16"><path d="M.5.5H15.5V12.5H11L8 15.5L5 12.5H.5Z" fill="none" stroke="#fff" strokeWidth="1.1" /></svg></TraySlot>
          <PeekEdge />
        </Tray>
      </Taskbar>
    </Screen>
  );
}
